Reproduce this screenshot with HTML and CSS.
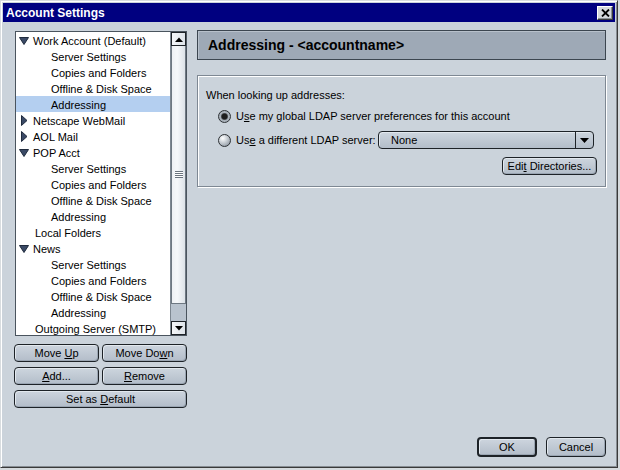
FILE: index.html
```html
<!DOCTYPE html>
<html>
<head>
<meta charset="utf-8">
<title>Account Settings</title>
<link rel="stylesheet" href="styles.css">
</head>
<body>
<div class="window">
  <div class="titlebar">
    <span class="title">Account Settings</span>
    <span class="close"><svg width="9" height="8" viewBox="0 0 9 8"><path d="M1 0.5L8 7.5M8 0.5L1 7.5" stroke="#000" stroke-width="1.8"/></svg></span>
  </div>
  <div class="main">
    <div class="left">
      <div class="tree">
        <ul class="rows">
          <li class="row parent"><span class="twisty"><svg width="10" height="8" viewBox="0 0 10 8"><path d="M0.5 0.5H9.5L5 7.5Z" fill="#3b4a66" stroke="#1f2a3d" stroke-width="1"/></svg></span>Work Account (Default)</li>
          <li class="row child">Server Settings</li>
          <li class="row child">Copies and Folders</li>
          <li class="row child">Offline &amp; Disk Space</li>
          <li class="row child selected">Addressing</li>
          <li class="row parent"><span class="twisty"><svg width="10" height="11" viewBox="0 0 10 11"><path d="M2.5 0.5V10.5L8 5.5Z" fill="#3b4a66" stroke="#1f2a3d" stroke-width="1"/></svg></span>Netscape WebMail</li>
          <li class="row parent"><span class="twisty"><svg width="10" height="11" viewBox="0 0 10 11"><path d="M2.5 0.5V10.5L8 5.5Z" fill="#3b4a66" stroke="#1f2a3d" stroke-width="1"/></svg></span>AOL Mail</li>
          <li class="row parent"><span class="twisty"><svg width="10" height="8" viewBox="0 0 10 8"><path d="M0.5 0.5H9.5L5 7.5Z" fill="#3b4a66" stroke="#1f2a3d" stroke-width="1"/></svg></span>POP Acct</li>
          <li class="row child">Server Settings</li>
          <li class="row child">Copies and Folders</li>
          <li class="row child">Offline &amp; Disk Space</li>
          <li class="row child">Addressing</li>
          <li class="row leaf">Local Folders</li>
          <li class="row parent"><span class="twisty"><svg width="10" height="8" viewBox="0 0 10 8"><path d="M0.5 0.5H9.5L5 7.5Z" fill="#3b4a66" stroke="#1f2a3d" stroke-width="1"/></svg></span>News</li>
          <li class="row child">Server Settings</li>
          <li class="row child">Copies and Folders</li>
          <li class="row child">Offline &amp; Disk Space</li>
          <li class="row child">Addressing</li>
          <li class="row leaf">Outgoing Server (SMTP)</li>
        </ul>
        <div class="scrollbar">
          <div class="sb-btn"><svg width="8" height="5" viewBox="0 0 8 5"><path d="M0 5L4 0.5L8 5Z" fill="#000"/></svg></div>
          <div class="sb-thumb"><span class="grip"></span></div>
          <div class="sb-track"></div>
          <div class="sb-btn"><svg width="8" height="5" viewBox="0 0 8 5"><path d="M0 0L4 4.5L8 0Z" fill="#000"/></svg></div>
        </div>
      </div>
      <div class="btns">
        <button class="btn">Move <u>U</u>p</button>
        <button class="btn">Move Do<u>w</u>n</button>
        <button class="btn"><u>A</u>dd...</button>
        <button class="btn"><u>R</u>emove</button>
        <button class="btn wide">Set as <u>D</u>efault</button>
      </div>
    </div>
    <div class="right">
      <div class="header">Addressing - &lt;accountname&gt;</div>
      <div class="group">
        <div class="glabel">When looking up addresses:</div>
        <div class="radio-row r1"><span class="radio on"></span><span>U<u>s</u>e my global LDAP server preferences for this account</span></div>
        <div class="radio-row r2"><span class="radio off"></span><span>Us<u>e</u> a different LDAP server:</span>
          <div class="select"><span class="sel-text">None</span><span class="sel-btn"><svg width="9" height="5" viewBox="0 0 9 5"><path d="M0 0H9L4.5 5Z" fill="#000"/></svg></span></div>
        </div>
        <div class="edit-row"><button class="btn edit">Edi<u>t</u> Directories...</button></div>
      </div>
    </div>
  </div>
  <div class="footer">
    <button class="btn big default">OK</button>
    <button class="btn big">Cancel</button>
  </div>
</div>
</body>
</html>
```
FILE: styles.css
```css
* { box-sizing: border-box; }
html, body { margin: 0; padding: 0; }
body {
  width: 620px;
  height: 470px;
  overflow: hidden;
  background: #d6dadd;
  font-family: "Liberation Sans", Arial, sans-serif;
  font-size: 11px;
  color: #000;
}
.window {
  width: 618px;
  height: 468px;
  display: flex;
  flex-direction: column;
  background: #cbd3db;
  border: 1px solid;
  border-color: #d8dcdf #3a3a3a #3a3a3a #d8dcdf;
  box-shadow: inset 1px 1px 0 #ffffff, inset -1px -1px 0 #878d93;
  padding: 2px;
}
.titlebar {
  height: 19px;
  flex: none;
  background: #000080;
  display: flex;
  align-items: center;
  justify-content: space-between;
  padding: 0 2px 0 3px;
}
.title {
  color: #fff;
  font-weight: bold;
  font-size: 12px;
}
.close {
  width: 16px;
  height: 14px;
  background: #d4d8dc;
  border: 1px solid;
  border-color: #ffffff #3a3a3a #3a3a3a #ffffff;
  box-shadow: inset -1px -1px 0 #8a9096;
  display: flex;
  align-items: center;
  justify-content: center;
}
.main {
  flex: 1;
  display: flex;
  gap: 10px;
  padding: 8px 9px 0 11px;
}
.left {
  width: 173px;
  flex: none;
  padding-top: 1px;
}
.tree {
  width: 172px;
  height: 305px;
  margin-left: 1px;
  border: 1px solid #4a545e;
  background: #fff;
  display: flex;
  overflow: hidden;
}
.rows {
  list-style: none;
  margin: 0;
  padding: 0;
  flex: 1;
  overflow: hidden;
}
.row {
  height: 16px;
  line-height: 16px;
  display: flex;
  align-items: center;
  white-space: nowrap;
  padding-top: 1px;
}
.row.parent { padding-left: 3px; }
.row.child { padding-left: 35px; }
.row.leaf { padding-left: 19px; }
.row.selected { background: #b4cff0; }
.twisty {
  width: 10px;
  margin-right: 4px;
  display: flex;
  align-items: center;
}
.scrollbar {
  width: 16px;
  flex: none;
  display: flex;
  flex-direction: column;
  border-left: 1px solid #7d8791;
  background: #b9c3ce;
}
.sb-btn {
  height: 14px;
  flex: none;
  border: 1px solid #1e2328;
  background: linear-gradient(90deg, #f4f6f8, #dde3e9);
  display: flex;
  align-items: center;
  justify-content: center;
}
.sb-thumb {
  height: 258px;
  flex: none;
  border: 1px solid #6e7882;
  border-top: none;
  background: linear-gradient(90deg, #eef1f4, #f6f8fa 40%, #dce2e8);
  display: flex;
  align-items: center;
  justify-content: center;
}
.grip {
  width: 8px;
  height: 7px;
  background: repeating-linear-gradient(180deg, #6a747e 0 1px, #ffffff 1px 2px);
}
.sb-track { flex: 1; }
.btns {
  margin-top: 8px;
  display: grid;
  grid-template-columns: 85px 85px;
  column-gap: 3px;
  row-gap: 5px;
}
.btn {
  height: 18px;
  padding: 0;
  margin: 0;
  border: 1px solid #1d2227;
  border-radius: 4px;
  background: linear-gradient(#cdd5de, #b3bdc9);
  box-shadow: inset 1px 1px 0 #e2e8ee, inset -1px -1px 0 #9aa5b2;
  font-family: "Liberation Sans", Arial, sans-serif;
  font-size: 11px;
  color: #000;
  text-align: center;
}
.btn.wide { grid-column: 1 / 3; }
.right {
  width: 409px;
  flex: none;
}
.header {
  height: 30px;
  background: #9ea9b6;
  border: 1px solid #3c4650;
  box-shadow: inset 1px 1px 0 #b8c1cb;
  display: flex;
  align-items: center;
  padding-left: 10px;
  font-size: 14px;
  font-weight: bold;
  color: #000;
}
.group {
  margin-top: 15px;
  border: 1px solid #7e8893;
  box-shadow: inset 1px 1px 0 #ffffff, 1px 1px 0 #ffffff;
  padding: 12px 8px 11px 8px;
}
.glabel {
  height: 14px;
  line-height: 14px;
}
.radio-row {
  display: flex;
  align-items: center;
  padding-left: 12px;
  white-space: nowrap;
}
.radio-row.r1 { height: 16px; margin-top: 6px; }
.radio-row.r2 { height: 18px; margin-top: 7px; }
.radio {
  width: 13px;
  height: 13px;
  border-radius: 50%;
  border: 1px solid #2e3236;
  margin-right: 5px;
  flex: none;
}
.radio.on {
  background: radial-gradient(circle at 50% 50%, #1e1e1e 0 2.6px, #55595e 3.2px, #a9b1ba 4px);
}
.radio.off {
  background: radial-gradient(circle at 35% 30%, #ffffff 0, #dfe3e7 25%, #a3abb4 70%, #6f7780 100%);
}
.select {
  margin-left: auto;
  margin-right: 3px;
  width: 216px;
  height: 18px;
  border: 1px solid #1d2227;
  border-radius: 4px;
  background: linear-gradient(#cdd5de, #b3bdc9);
  box-shadow: inset 1px 1px 0 #e2e8ee;
  display: flex;
  align-items: center;
}
.sel-text {
  flex: 1;
  padding-left: 12px;
}
.sel-btn {
  width: 18px;
  height: 100%;
  border-left: 1px solid #1d2227;
  display: flex;
  align-items: center;
  justify-content: center;
}
.edit-row {
  display: flex;
  justify-content: flex-end;
  margin-top: 8px;
}
.btn.edit { width: 95px; }
.footer {
  flex: none;
  display: flex;
  justify-content: flex-end;
  gap: 9px;
  padding: 0 9px 8px 0;
}
.btn.big {
  width: 60px;
  height: 20px;
}
.btn.default {
  border-width: 2px;
}
```
